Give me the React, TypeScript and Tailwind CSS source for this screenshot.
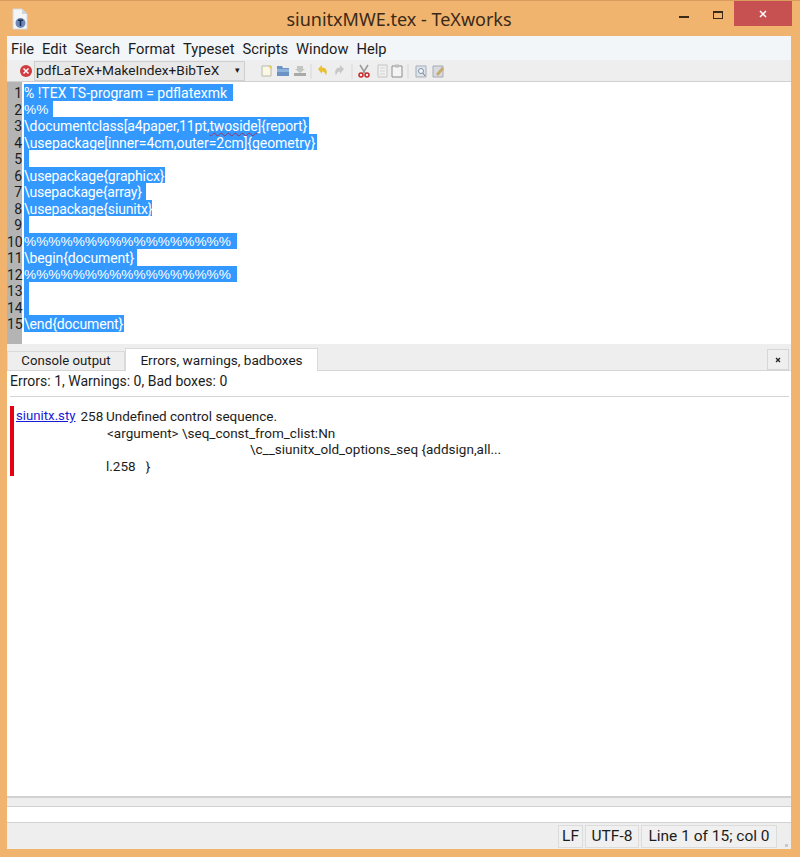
import React from "react";

const pct = "font-['Liberation_Sans',sans-serif] text-[13.700px]";
const lines: [string, number, string][] = [
  ["% !TEX TS-program = pdflatexmk", 209, ""],
  ["%%", 29, pct],
  ["\\documentclass[a4paper,11pt,twoside]{report}", 285, "tracking-[-0.13px]"],
  ["\\usepackage[inner=4cm,outer=2cm]{geometry}", 293, "tracking-[-0.05px]"],
  ["", 5, ""],
  ["\\usepackage{graphicx}", 141, "tracking-[-0.15px]"],
  ["\\usepackage{array}", 122, "tracking-[-0.2px]"],
  ["\\usepackage{siunitx}", 128, "tracking-[-0.15px]"],
  ["", 5, ""],
  ["%%%%%%%%%%%%%%%%%", 213, pct],
  ["\\begin{document}", 113, "tracking-[-0.15px]"],
  ["%%%%%%%%%%%%%%%%%", 213, pct],
  ["", 5, ""],
  ["", 5, ""],
  ["\\end{document}", 100, "tracking-[-0.15px]"],
];

function TitleIcon() {
  return (
    <svg width="18" height="22" viewBox="0 0 18 22">
      <path d="M2 1h9l5 5v15H2z" fill="#f4f5f7" stroke="#d5d8de" />
      <path d="M11 1v5h5" fill="#cfd4dc" />
      <circle cx="9.5" cy="15" r="5" fill="#6d86b8" />
      <path d="M7 11.5h5v1.5h-1.7v5h-1.6v-5H7z" fill="#1d2b4d" />
    </svg>
  );
}

function ToolIcons() {
  return (
    <div className="flex items-center ml-[15px] h-full">
      <svg width="200" height="16" viewBox="0 0 200 16">
        <path d="M2 3h9v10H2z" fill="#fbf8e4" stroke="#b8b8b0" />
        <path d="M9 2l3 2-2 2z" fill="#e8c93c" />
        <path d="M17 3h5l1 2h6v8H17z" fill="#6b94c4" />
        <path d="M17 6h12v3H17z" fill="#8db2dc" />
        <path d="M34 10h12v3H34z" fill="#a8aaa8" />
        <path d="M37 3h6v3h2l-5 4-5-4h2z" fill="#c3c5c2" />
        <path d="M51 1v15" stroke="#d8d8d8" />
        <path d="M58 6l4-4v2.500c4 0 6 3 4 8-1-3-2-4-4-4V11z" fill="#e9c02e" />
        <path d="M84 6l-4-4v2.500c-4 0-6 3-4 8 1-3 2-4 4-4V11z" fill="#c8c8c8" />
        <path d="M92 1v15" stroke="#d8d8d8" />
        <path d="M100 2l5 8M108 2l-5 8" stroke="#9a9a9a" strokeWidth="1.500" />
        <circle cx="101" cy="12" r="2" fill="none" stroke="#c62828" strokeWidth="1.500" />
        <circle cx="107" cy="12" r="2" fill="none" stroke="#c62828" strokeWidth="1.500" />
        <path d="M118 2h9v12h-9z" fill="#f0f0f0" stroke="#c4c4c4" />
        <path d="M120 5h5M120 8h5M120 11h5" stroke="#d4d4d4" />
        <path d="M132 3h10v11h-10z" fill="#f4f4f4" stroke="#8c8c8c" />
        <path d="M135 1.500h4v3h-4z" fill="#bdbdbd" />
        <path d="M148 1v15" stroke="#d8d8d8" />
        <path d="M156 3h10v11h-10z" fill="#dfe4ec" stroke="#a5adb8" />
        <circle cx="161" cy="8" r="2.500" fill="#f4f6f8" stroke="#7d90aa" />
        <path d="M163 10l2 3" stroke="#7d7d7d" />
        <path d="M173 3h10v11h-10z" fill="#d8dbe2" stroke="#a8aab0" />
        <path d="M176 11l6-7 2 2-6 7z" fill="#c8a96a" />
      </svg>
    </div>
  );
}

function StatusBox({ w, children }: { w: string; children: React.ReactNode }) {
  return (
    <div className={`${w} h-[23px] border border-[#dcdcdc] bg-[#f0f0f0] flex items-center justify-center pt-[1px]`}>
      {children}
    </div>
  );
}

export default function App() {
  return (
    <div className="w-[800px] h-[857px] bg-[#f0b46e] flex flex-col overflow-hidden text-[#1c1c1c] font-['Roboto','Noto_Sans',sans-serif] border-t border-[#d99c5c]">
      <div className="h-[35px] flex shrink-0 text-[#3b2a18] font-['Noto_Sans',sans-serif]">
        <div className="w-[11px]" />
        <div className="w-[20px] pt-[7px]"><TitleIcon /></div>
        <div className="w-[255px]" />
        <div className="w-[226px] text-[18px] leading-[36px] text-center whitespace-nowrap">siunitxMWE.tex - TeXworks</div>
        <div className="w-[167px]" />
        <div className="w-[10px] h-[2px] mt-[15px] bg-[#3a2a18]" />
        <div className="w-[24px]" />
        <div className="w-[10px] h-[8px] mt-[10px] border border-[#3a2a18] border-t-2" />
        <div className="w-[11px]" />
        <div className="w-[58px] h-[25px] bg-[#c75050] flex items-center justify-center">
          <svg width="8" height="8" viewBox="0 0 8 8"><path d="M1 1l6 6M7 1L1 7" stroke="#fff" strokeWidth="1.500" /></svg>
        </div>
      </div>

      <div className="ml-[7px] w-[784px] h-[813px] flex flex-col bg-[#eeeeee]">
        <div className="h-[24px] bg-[#f3f6f8] flex items-center gap-[8px] pl-[4px] pt-[1px] text-[14.700px] leading-[24px] shrink-0">
          <span>File</span><span>Edit</span><span>Search</span><span>Format</span><span>Typeset</span><span>Scripts</span><span>Window</span><span>Help</span>
        </div>

        <div className="h-[22px] bg-[#eeeeee] border-b border-[#d0d0d0] flex items-center shrink-0">
          <div className="w-[12px]" />
          <svg width="14" height="14" viewBox="0 0 14 14"><circle cx="7" cy="7" r="6" fill="#d13a3f" /><path d="M4.500 4.500l5 5M9.500 4.500l-5 5" stroke="#fff" strokeWidth="1.500" /></svg>
          <div className="w-[211px] h-[20px] ml-[1px] border border-[#cfcfcf] bg-[#e8e8e8] flex items-center justify-between pl-[1px] pr-[4px] text-[13.700px] whitespace-nowrap">
            <span>pdfLaTeX+MakeIndex+BibTeX</span>
            <span className="text-[9px]">▾</span>
          </div>
          <ToolIcons />
        </div>

        <div className="h-[262px] bg-white flex shrink-0 overflow-hidden">
          <div className="w-[15px] bg-[#b4b4b4] text-right pt-[2px] text-[14px] leading-[16.5px] shrink-0">
            {lines.map((_, i) => (
              <div key={i} className="h-[16.5px] pt-[1px]">{i + 1}</div>
            ))}
          </div>
          <div className="ml-[2px] pt-[2px] text-[14px] leading-[16.5px] text-white">
            {lines.map(([t, w, track], i) => (
              <div key={i} className={`h-[16.5px] pt-[1px] bg-[#3399ff] whitespace-pre ${track}`} style={{ width: w }}>
                {t.includes("twoside") ? (
                  <>
                    {"\\documentclass[a4paper,11pt,"}
                    <span className="underline decoration-wavy decoration-1 decoration-[#a03060]">twoside</span>
                    {"]{report}"}
                  </>
                ) : t}
              </div>
            ))}
          </div>
        </div>

        <div className="h-[27px] flex items-end shrink-0 border-b border-[#d6d6d6]">
          <div className="w-[118px] h-[19px] bg-[#eeeeee] border border-[#dadada] border-b-0 flex items-center justify-center text-[13.200px]">Console output</div>
          <div className="w-[193px] h-[23px] bg-white border border-[#dadada] border-b-0 -mb-px flex items-center justify-center text-[13.600px]">Errors, warnings, badboxes</div>
          <div className="flex-1" />
          <div className="w-[22px] h-[21px] mr-[2px] border border-[#d6d6d6] bg-[#efefef] flex items-center justify-center">
            <svg width="6" height="6" viewBox="0 0 6 6"><path d="M1 1l4 4M5 1L1 5" stroke="#222" strokeWidth="1.300" /></svg>
          </div>
        </div>

        <div className="h-[427px] shrink-0 bg-white flex flex-col text-[13.500px] border-b-2 border-[#d2d2d2] pl-[3px] pr-[2px]">
          <div className="h-[26px] leading-[21px] border-b border-[#d4d4d4] text-[14px]">Errors: 1, Warnings: 0, Bad boxes: 0</div>
          <div className="mt-[9px] flex">
            <div className="w-[4px] h-[70px] bg-[#e60012]" />
            <div className="ml-[2px] w-[90px] leading-[16.5px] pt-[2px] flex gap-[5px] shrink-0">
              <span className="text-[#1a1ad6] underline text-[13.200px]">siunitx.sty</span>
              <span>258</span>
            </div>
            <div className="leading-[16.5px] pt-[2px] whitespace-pre">
              <div>Undefined control sequence.</div>
              <div className="pl-[1px]">{"<argument> \\seq_const_from_clist:Nn"}</div>
              <div className="pl-[144px]">{"\\c__siunitx_old_options_seq {addsign,all..."}</div>
              <div>{"l.258   }"}</div>
            </div>
          </div>
        </div>

        <div className="h-[9px] shrink-0 bg-[#eeeeee] border-b border-[#d2d2d2]" />
        <div className="h-[16px] shrink-0 bg-white border-b border-[#d2d2d2]" />
        <div className="h-[26px] shrink-0 bg-[#eeeeee] flex items-center justify-end gap-[2px] pr-[3px] text-[15.500px]">
          <StatusBox w="w-[25px]">LF</StatusBox>
          <StatusBox w="w-[54px]">UTF-8</StatusBox>
          <StatusBox w="w-[136px]">Line 1 of 15; col 0</StatusBox>
          <svg className="ml-[6px] self-end mb-[2px]" width="3" height="4" viewBox="0 0 3 4"><path d="M0 1h3v3H0z" fill="#c8c8c8" /></svg>
        </div>
      </div>
    </div>
  );
}
